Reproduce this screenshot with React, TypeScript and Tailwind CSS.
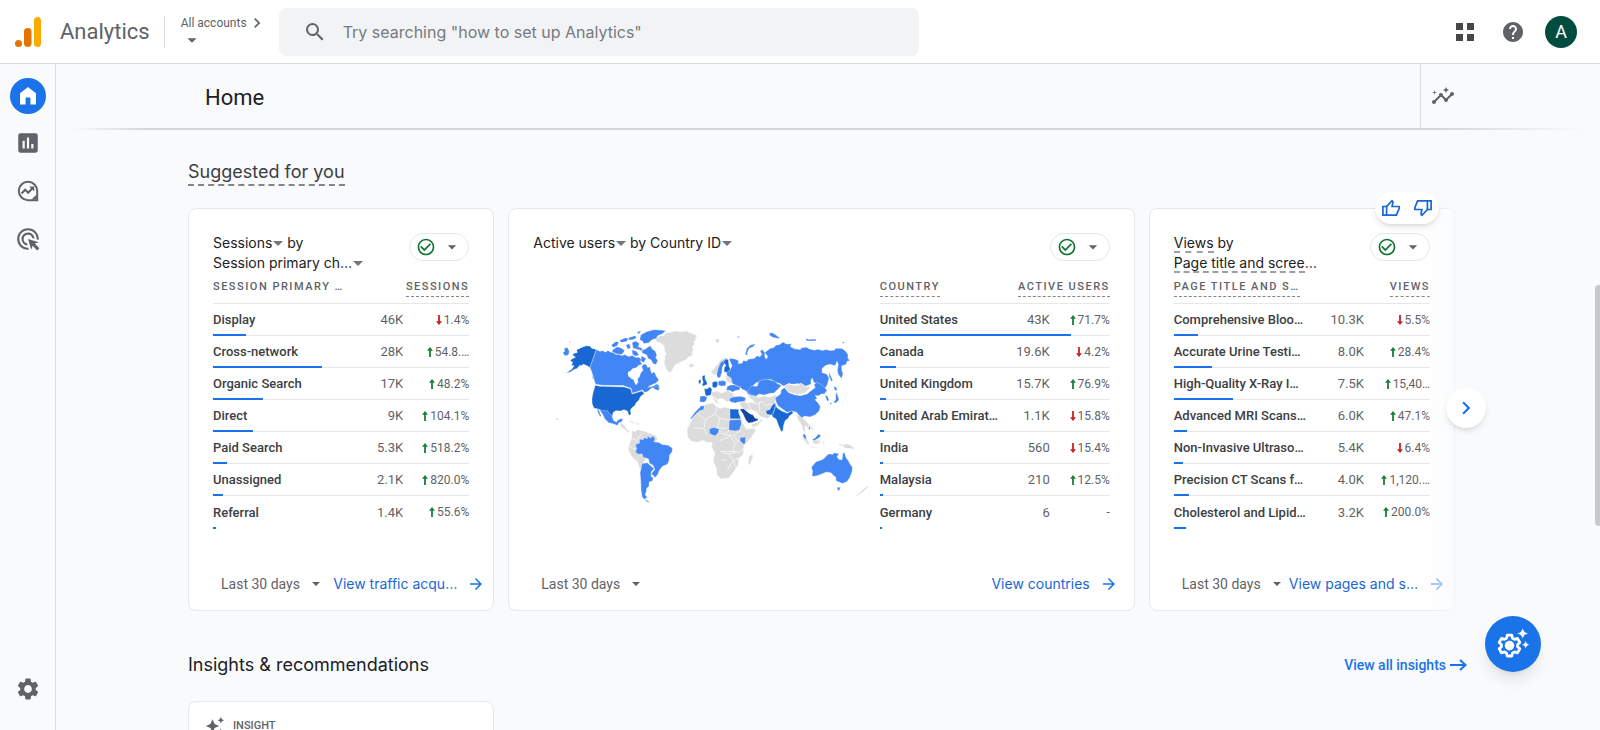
import React from 'react';
import {
  MdAdsClick,
  MdArrowDropDown,
  MdArrowForward,
  MdAutoAwesome,
  MdCheckCircleOutline,
  MdChevronRight,
  MdHelp,
  MdInsertChart,
  MdInsights,
  MdSearch,
  MdSettings,
} from 'react-icons/md';

interface Row {
  label: string;
  value: string;
  change: string;
  trend: 'up' | 'down' | 'none';
  bar: number;
}

const sessionRows: Row[] = [
  { label: 'Display', value: '46K', change: '1.4%', trend: 'down', bar: 13 },
  { label: 'Cross-network', value: '28K', change: '54.8.…', trend: 'up', bar: 42.5 },
  { label: 'Organic Search', value: '17K', change: '48.2%', trend: 'up', bar: 19.5 },
  { label: 'Direct', value: '9K', change: '104.1%', trend: 'up', bar: 15.5 },
  { label: 'Paid Search', value: '5.3K', change: '518.2%', trend: 'up', bar: 5.5 },
  { label: 'Unassigned', value: '2.1K', change: '820.0%', trend: 'up', bar: 4 },
  { label: 'Referral', value: '1.4K', change: '55.6%', trend: 'up', bar: 1.3 },
];

const countryRows: Row[] = [
  { label: 'United States', value: '43K', change: '71.7%', trend: 'up', bar: 83 },
  { label: 'Canada', value: '19.6K', change: '4.2%', trend: 'down', bar: 7 },
  { label: 'United Kingdom', value: '15.7K', change: '76.9%', trend: 'up', bar: 2.5 },
  { label: 'United Arab Emirat…', value: '1.1K', change: '15.8%', trend: 'down', bar: 2 },
  { label: 'India', value: '560', change: '15.4%', trend: 'down', bar: 1.3 },
  { label: 'Malaysia', value: '210', change: '12.5%', trend: 'up', bar: 1.3 },
  { label: 'Germany', value: '6', change: '-', trend: 'none', bar: 1 },
];

const pageRows: Row[] = [
  { label: 'Comprehensive Bloo…', value: '10.3K', change: '5.5%', trend: 'down', bar: 9.5 },
  { label: 'Accurate Urine Testi…', value: '8.0K', change: '28.4%', trend: 'up', bar: 15 },
  { label: 'High-Quality X-Ray I…', value: '7.5K', change: '15,40…', trend: 'up', bar: 23 },
  { label: 'Advanced MRI Scans…', value: '6.0K', change: '47.1%', trend: 'up', bar: 5 },
  { label: 'Non-Invasive Ultraso…', value: '5.4K', change: '6.4%', trend: 'down', bar: 3.7 },
  { label: 'Precision CT Scans f…', value: '4.0K', change: '1,120.…', trend: 'up', bar: 6 },
  { label: 'Cholesterol and Lipid…', value: '3.2K', change: '200.0%', trend: 'up', bar: 4.7 },
];

const Logo = () => (
  <svg width="26" height="30" viewBox="0 0 26 30" aria-hidden="true">
    <rect x="19" y="0" width="7" height="30" rx="3.5" fill="#fbab00" />
    <rect x="9" y="11" width="7.5" height="19" rx="3.7" fill="#e37400" />
    <circle cx="3.5" cy="26.4" r="3.5" fill="#e37400" />
  </svg>
);

const ExploreIcon = () => (
  <svg width="22" height="22" viewBox="0 0 22 22" fill="none" aria-hidden="true">
    <path d="M11 1.8a9.2 9.2 0 1 0 0 18.4h9.2V11A9.2 9.2 0 0 0 11 1.8Z" stroke="#5f6368" strokeWidth="2" />
    <path d="M19.5 14.5 14.5 19.5h5Z" fill="#5f6368" />
    <path d="m4.5 13.5 3.7-3.8 3 3 4.2-4.4" stroke="#5f6368" strokeWidth="2" />
    <path d="M12.3 6.6h4.9v4.9Z" fill="#5f6368" />
  </svg>
);

const HomeIcon = () => (
  <svg width="24" height="24" viewBox="0 0 24 24" fill="#fff" aria-hidden="true">
    <path d="M4 20.5V9.3L12 3l8 6.3v11.2h-5.6v-7H9.6v7Z" />
  </svg>
);

const ThumbIcon = ({ down = false }: { down?: boolean }) => (
  <svg
    width="20"
    height="20"
    viewBox="0 0 20 20"
    fill="none"
    stroke="#1967d2"
    strokeWidth="1.7"
    className={down ? 'rotate-180' : ''}
    aria-hidden="true"
  >
    <path d="M1.9 8.5h3.7v8.7H1.9Z" />
    <path d="M5.6 8.5 11 2.7l1 1-.9 4.8h7v2.2l-2.7 6.5H5.6" />
  </svg>
);

const GearSparkIcon = () => (
  <svg width="34" height="32" viewBox="0 0 34 32" aria-hidden="true">
    <path
      d="M11.2 7.2h4.6l.7 3 2 1.1 3-.9 2.3 4-2.2 2.1v2.2l2.2 2.1-2.3 4-3-.9-2 1.1-.7 3h-4.6l-.7-3-2-1.1-3 .9-2.3-4 2.2-2.1v-2.2l-2.2-2.1 2.3-4 3 .9 2-1.1Z"
      fill="none"
      stroke="#fff"
      strokeWidth="2.8"
      strokeLinejoin="round"
    />
    <circle cx="13.5" cy="17.6" r="4.8" fill="#fff" />
    <path d="M26.7.2c1 3.3 1.9 4.2 5.2 5.2-3.3 1-4.2 1.9-5.2 5.2-1-3.3-1.9-4.2-5.2-5.2 3.3-1 4.2-1.9 5.2-5.2Z" fill="#fff" />
    <path d="M29.7 13c.7 2.5 1.3 3.1 3.8 3.8-2.5.7-3.1 1.3-3.8 3.8-.7-2.5-1.3-3.1-3.8-3.8 2.5-.7 3.1-1.3 3.8-3.8Z" fill="#fff" />
  </svg>
);

const TrendArrow = ({ trend }: { trend: Row['trend'] }) => {
  if (trend === 'none') return null;
  return (
    <svg width="8" height="10" viewBox="0 0 8 10" className="shrink-0" aria-label={trend}>
      {trend === 'up' ? (
        <path d="M4 0 7 3.8H4.9V10H3.1V3.8H1Z" fill="#188038" />
      ) : (
        <path d="M4 10 1 6.2h2.1V0h1.8v6.2H7Z" fill="#c5221f" />
      )}
    </svg>
  );
};

const Caret = () => (
  <svg width="10" height="5" viewBox="0 0 10 5" className="inline-block shrink-0" aria-hidden="true">
    <path d="M0 0h10L5 5Z" fill="#757575" />
  </svg>
);

const WorldMap = () => (
  <svg viewBox="-21 0 1000 600" className="w-full" role="img" aria-label="Active users by country" strokeLinejoin="round">
    <g fill="#dcdcdc" stroke="#fff" strokeWidth="2">
      {/* Greenland, Iceland, Svalbard */}
      <path d="M343 88 352 84 358 80 372 78 376 70 394 69 402 66 420 67 440 66 452 72 472 80 465 86 467 92 460 97 462 106 455 113 459 120 455 130 457 138 444 144 438 152 424 157 415 163 405 167 398 178 394 186 388 191 379 183 374 172 370 160 374 150 371 141 378 136 372 125 371 112 363 103 350 100Z" />
      <path d="m444 167 8-4 9 2-1 7-9 3-6-3ZM521 92l9-4 9 4-8 12Z" />
      {/* Central and northern South America */}
      <path d="m236 343 8-2 10 8 6 12 10 5-6 4-12-10-8-6ZM262 332l12 3 9 5-4 2-12-5ZM286 340l10 2 3 4-13-1Z" />
      <path d="m274 364 12 2 5-6 12 3 15 4 15 6 14 5 4 11-14 25-30 50 28 18 8 12-12 8-34-26-7-20-16-14-11-22 4-17 7-19Z" />
      <path d="m338 484 12 9-6 9-9-3Z" />
      {/* Norway, Baltics, central Europe */}
      <path d="m511 188 10-12 8-8 10-16 16-8 9 3-18 10-12 20-4 17-10 5ZM556 196h17l4 28-21-8ZM512 248l16-3 14 6 18-7 18 7 6 18-24 10-16-12-14 5-16-10ZM515 262l8 3 12 17-6 2-13-16Z" />
      {/* Middle East and central Asia */}
      <path d="m594 280 16-4 9 5 14-3 14 5 16-8 18 2 16 6-4 30-10 16-21-6-17-14-20-8-12 3-12-12Z" />
      <path d="m620 260 20-3 15 7 12-4 18 3 19-5 12 5-11 10-3 14-14-3-12 5-12-13-18 9-10-12Z" />
      <path d="m632 343 20-4 9-10 5 2-14 17-17 7Z" />
      {/* Africa */}
      <path d="m454 330 10-12 14-24 20-10 19-4 8 9 14 8 13-4 20 6 16 3 12 16 7 24 10 17 24-3 4 7-12 20-23 25-2 27-13 12-2 18-14 22-14 18-24 4-12-12-3-23-9-20 5-24-9-17 1-14-14 1-12-7-17 6-18-3-12-12-2-24Z" />
      <path d="m623 444 12-12 2 12-10 24-5-6Z" />
      {/* Southeast Asia, New Zealand */}
      <path d="m768 314 14 8 10 9 15 18-2 8-13-7 1 20-5-2-8-24-12-18ZM783 374l10 8 12 18-2 9-18-22ZM814 388l18 5 8-8-4 16-12 4-9-6ZM844 394l8 3-4 12ZM808 410l26 5-1 3-24-4ZM812 334l6 14-4 3Z" />
      <path d="m890 401 16 4 14-2 15 8 8 9-18-3-12 1-6-8-12-1ZM806 342l6 10 6 10-4 2-8-12ZM942 558l14-10 24-21 2 4-16 16-20 12Z" />
    </g>
    <g fill="none" stroke="#fff" strokeWidth="2">
      <path d="m470 312 25 20 28-20 8-22M523 312l14 14 32 8v-36M537 326l-6 32 28-2M495 332l-5 26-30-3M490 358l9 18M531 358l18 18 18-14M550 376l30 2 20-14M580 378l10 18 30-6M537 394l32-14 15 22-8 24h-38M576 426l22 2 10-12M546 430l20 4 12 20-18 26M566 434l24-8M578 454l18-10M560 450l-18 2M578 454l6 18M620 282l12 20 20 6M655 280l3 30M270 385l20 8 14-22M266 412l22 8M568 334l-4 30" />
    </g>
    <g fill="#4285f4" stroke="#fff" strokeWidth="1">
      {/* Canada */}
      <path d="m168 121 10 5 10-1 8 4 7-5 9 5 7 1 8 6 10-1 7 5 10-4 10 6 12-3 10 6 9-1 8 6-3 8 6 7-11 3-6 7-13 4-5 6-8 4 1 11 9 8 8 4 1 6 5 9 6-8-2-10 6-6 4-12 7-8-4-11 7-8 8 4 3 8 7-4 1 10 4 10 8-4 6 14 7 10-8 9-16 7-9 6 18-4 8-6 8 5 1 11-13-1-9-4-13 12-9 3-7-8-14 5-16 5-4-15-24-8-62-1-20-3-5-15-4-14-4-12-4-10Z" />
      <path d="m301 78 17-10 22-6 22 1 14 2-10 9-14 6-5 8-12 4-11 10-14 1-4-7-8-4ZM322 114l8-4 6 10 9 6 4 12-3 8 6 8-5 12-9-2-6-12-8-3-6-12-12-5-4-10 12-2ZM213 108l14-11 9 2-5 11-12 5ZM219 120l12-7 13 4 9 8-8 11-18-2-12-7ZM237 94l18-8 10 3-6 8-16 3ZM257 108l10-4 4 12-9 4ZM266 85l18-5 5 6-12 6-13 1ZM275 100l12-4 10 8-4 9 12 4 3 9-18-6-12-3ZM275 122l13 4 8 11-10 4-10-6ZM303 140l14 8-7 12-8-4ZM294 67l8-2-6 10-6-4Z" />
      <path d="m340 237 8-8 8 7-1 8-10-3ZM158 200l4 7-2 2-4-5Z" />
      {/* Mexico */}
      <path d="m175 292 14 4 16-3 6 10 7 4-2 16 4 10 8 5 7-8 13-3-3 10-9 3-4 8-14-5-13-3-11-11-7-14-8-12ZM171 293l6 13 6 14-3 2-8-14Z" />
      {/* Brazil and Argentina */}
      <path d="m285 405 12-4 1-12 10 2 5-7 8 4 0-9 8 7 10-6 5 9-4 8 16 2 9 6 18 2 13 9-1 10-8 11-1 16-5 11-15 6-9 12-5 13-8 9-11-12 10-12-5-13-11-6-3-13-16-5-3-10-10 1-10-6 4-10Z" />
      <path d="m305 462 16-2 13 12 7 5-9 10 0 14 7 4-3 9-10 3 0 12-7 7-1 10-4 8 6 10-8 5-7-8-3-19-1-30-2-22 4-17ZM314 569l13 7-1 2-10-3Z" />
      {/* Spain, Morocco, Poland, Ukraine, Turkey, Sweden */}
      <path d="m479 260 13 0 8 3-4 12-7 4-12-2ZM482 289l9 0-2 12-12 3-10 9-14 16-3-2 13-18ZM533 216l14-2 9 3-1 12-12 2-10-4ZM560 231l11-4 10 0 18 7-3 8-12 2-8 4-10-5-9 0ZM568 266l14-4 18-1 15 4-3 11-19 2-9 3-13-3-5-5ZM528 196l4-18 8-18 14-10 0 8-9 16-1 14-5 16-8 2Z" />
      {/* Nigeria, Sudan, Kenya */}
      <path d="m506 358 14-4 16 5-4 12-8 8-8-2-9-5ZM566 332l34-2 2 14-6 18-12 3-20-3ZM598 384l17-1-1 16-4 6-12-10Z" />
      {/* Russia */}
      <path d="m568 182 6-12-8-18 2-5 16 3 10 5-2 8 12-1 4-8 10 2 4-6 18-2 9-8 8 3 6-7-5-10 6-5 8 9 0 11 4 9 5-8-9-11 5-5 12-9 9-1 8-8 9-1 12-8 9 6 16-1-4 8 12 7 18 2 4-5 15-2 7 5 17 4 10-3 13 4 12-3 10 3 14-1 4-6 19 1 11 8 7 11-1 9 6 9-8 1-3 10-13 4 0 12 4 12-5 14-10-14-2-12 3-15-4-11-6 14-15-5-14 4-10 10 0 11 15 5 6 11-5 20-7 12-15-12-18-6-5-13-4 4 0 13-17 8-12-6-10-3-14 2-14-2-14 8-12-8-12-4-15-8-18 2-12 4-15 4-13 14-4 6 10 15-3 4-13-5-6-10-11-5-8-7-12-5-10-5-4-17-12-7-2-10Z" />
      <path d="m613 136 5-18 11-10 15-4-6 8-13 6-6 14 4 6ZM685 72l10-1 10 7 13 9-6 1-14-3-10-4ZM795 88l10 3 20-1 0 5-18 1-12-2ZM588 82l10 0-5 4ZM902 98l8 1-3 4ZM72 117l10-2 6 13-4 10-10 2-6-10 6-4ZM88 99l4-2 0 4ZM864 188l5 12 6 12-3 6-8-17Z" />
      {/* Kazakhstan */}
      <path d="m624 240 8-10 17 1 6-16 18-5 14 2 14 3 8 8 13 6-12 12-10 10-12 1-18 5-15-3-10 7-14-5-10-8Z" />
      {/* China */}
      <path d="m703 266 16-12 2-12 10-7 12 15 17 6 18 3 20-5 15-12 10-7-4-8 8-8 16 8 10 10 5 7-8 10-9 0-8 5-11 0 7 8-7 4 10 11 6 10-3 12-12 12-16 7-15-3-10 5-9-9-7-8-14-2-14 3-10-8-16-11-6-12Z" />
      {/* Japan and Korea */}
      <path d="m878 230 10 7-2 9-6-6ZM886 250l4 8 4 14-10 9-7-2 7-8 0-17ZM867 280l6 0-4 8ZM852 258l8 3 4 12-5 3-4-9Z" />
      {/* Malaysia, Vietnam */}
      <path d="m787 373 6 2 4 12-4 2-7-9ZM814 390l10-6 8-10 8 4-6 8-10 5-6 2ZM805 350l3 6-2 6-3-1Z" />
      {/* Australia */}
      <path d="m818 465 7-8 12-4 9-4 6-5 7-8 7-3 9 2 4-5 15 3-6 9 6 8 9 1 2-18 5-5 5 17 8 10 4 9 7 9-1 12-6 17-9 14-14 6-10-5-9-3-1-12-7-4-6-8-14-3-12 5-10 4-9 3-13 1 2-16-4-10ZM888 533l10 0-3 10-5 0Z" />
      <path d="m42 318 5 4M48 326l5 3-2 3Z" />
    </g>
    <g fill="#1967d2" stroke="#fff" strokeWidth="1">
      {/* United States with Alaska */}
      <path d="m168 121-14-4-4-6-12-1-12 4-16 8 1 9-9 1-5 5 9 7-12 6-4 5 8 4-4 9 8 2-6 9-13 9-7 3 13-2 14-9 8-2 7-9 5 0 7-4 11 5 8 5Z" />
      <path d="m165 228 14 3 72 2 20 6 4 15 15-4 14-5 8 7-12 10-4 10-9 8-2 7-11 9-4 7 2 11-5 5-6-14-10-4-10 4-15-1-8 6-2 10-8-8-6-8-14 0-14-5-13-3-5-12-1-14 3-18Z" />
      {/* UK, Ireland, France, Germany, Finland */}
      <path d="m485 200 8-3 0 11 5 9 2 8-11 5-5-2 4-9-3-9ZM474 213l7-2 0 10-6 3ZM491 238l8 1 8-6 7 7-3 17-12 3-5-3ZM515 220l8-4 8 2-1 13-6 5-9-3ZM549 160l6-11 8 3 2 19 4 9-8 9-11-1 1-13 5-6Z" />
      {/* Egypt, Pakistan, India */}
      <path d="m568 299 26 1 0 10 6 18-32 0ZM675 304l12-3 8-15 8-5 3 8-9 21-1 8-18-3ZM703 285l6 11 12 8 18 8 14-8 4 7-12 9-2 6-10 7-5 15-2 17-5 1-8-18-7-19-9-5-6-8 8-8 3-13Z" />
    </g>
    {/* Saudi Arabia */}
    <path d="m597 299 11-1 19 15 10 4 6 10 9 1-1 5-17 6-11 2-8-9-8-18Z" fill="#0d47a1" stroke="#fff" strokeWidth="1" />
    {/* Mongolia */}
    <path d="m728 231 16-7 14 4 14-1 8-5 14 9 15 1-8 12-12 8-16 4-18-4-12-4-8-11Z" fill="#dcdcdc" stroke="#fff" strokeWidth="2" />
  </svg>
);

const StatusPill = () => (
  <button
    type="button"
    aria-label="Data quality"
    className="flex h-7 w-15 shrink-0 items-center justify-between rounded-full border border-gray-200 bg-white px-1.5"
  >
    <MdCheckCircleOutline size={20} color="#137333" />
    <MdArrowDropDown size={20} color="#5f6368" />
  </button>
);

interface DataTableProps {
  rows: Row[];
  dimension: string;
  metric: string;
  dottedDimension?: boolean;
  compact?: boolean;
}

const DataTable: React.FC<DataTableProps> = ({ rows, dimension, metric, dottedDimension = true, compact = false }) => (
  <table className="w-full table-fixed border-collapse text-[13px]">
    <colgroup>
      <col />
      <col className="w-[52px]" />
      <col className={compact ? 'w-15' : 'w-[66px]'} />
    </colgroup>
    <thead>
      <tr className="h-[26px] border-b border-gray-200 text-[11px] tracking-[1.5px] text-[#5f6368]">
        <th className="p-0 text-left align-top font-medium whitespace-nowrap">
          <span className={dottedDimension ? 'inline-block h-5 border-b border-dashed border-[#80868b] leading-5' : 'leading-5'}>
            {dimension}
          </span>
        </th>
        <th colSpan={2} className="p-0 text-right align-top font-medium whitespace-nowrap">
          <span className="inline-block h-5 border-b border-dashed border-[#80868b] leading-5">{metric}</span>
        </th>
      </tr>
    </thead>
    <tbody>
      {rows.map((row, index) => (
        <tr key={row.label} className={`relative h-8 ${index < rows.length - 1 ? 'border-b border-gray-200' : ''}`}>
          <td className="px-0 pt-0.5 pb-0 font-medium whitespace-nowrap text-[#3c4043]">
            {row.label}
            <div className="absolute -bottom-0.5 left-0 h-0.5 bg-[#1a73e8]" style={{ width: `${row.bar}%` }} />
          </td>
          <td className="px-0 pt-0.5 pb-0 text-right text-[#5f6368]">{row.value}</td>
          <td className="px-0 pt-0.5 pb-0 text-xs text-[#5f6368]">
            <div className="flex items-center justify-end gap-px">
              <TrendArrow trend={row.trend} />
              {row.change}
            </div>
          </td>
        </tr>
      ))}
    </tbody>
  </table>
);

const CardFooter = ({ link, faded = false, wide = false }: { link: string; faded?: boolean; wide?: boolean }) => (
  <div className={`mt-auto flex items-center justify-between pb-4 pl-8 ${wide ? 'pr-4' : 'pr-2'}`}>
    <button type="button" className="flex items-center gap-3 text-sm whitespace-nowrap text-[#5f6368]">
      Last 30 days
      <svg width="8" height="4" viewBox="0 0 8 4" aria-hidden="true">
        <path d="M0 0h8L4 4Z" fill="#5f6368" />
      </svg>
    </button>
    <a href="#" className="flex items-center gap-2.5 font-[Inter,sans-serif] text-sm whitespace-nowrap text-[#1967d2]">
      {link}
      <MdArrowForward size={18} color={faded ? '#669df6' : '#1a73e8'} />
    </a>
  </div>
);

const MetricButton = ({ children }: { children: React.ReactNode }) => (
  <button type="button" className="inline-flex items-center gap-px">
    {children}
    <Caret />
  </button>
);

const cardClass = 'flex h-[403px] flex-col rounded-lg border border-gray-200 bg-white pt-6';
const titleClass = 'font-[Inter,sans-serif] text-sm leading-5 whitespace-nowrap text-[#202124]';

const App: React.FC = () => {
  return (
    <div className="flex h-screen flex-col overflow-hidden bg-[#f8fafc] font-[Roboto,sans-serif] text-[#202124]">
      <header className="relative z-10 flex h-16 shrink-0 items-center border-b border-[#dadce0] bg-white pr-[23px] pl-[15px]">
        <a href="#" className="flex items-center gap-[19px]">
          <Logo />
          <span className="text-[22px] text-[#5f6368]">Analytics</span>
        </a>
        <div className="ml-3.5 h-8 w-px bg-[#dadce0]" />
        <button type="button" className="ml-4 flex w-[98px] flex-col items-start pb-1 text-xs text-[#5f6368]">
          <span className="flex h-5 items-center whitespace-nowrap">
            All accounts
            <MdChevronRight size={20} />
          </span>
          <MdArrowDropDown size={22} className="-my-1" />
        </button>
        <label className="flex h-12 w-[640px] items-center gap-4 rounded-lg bg-[#f1f3f4] px-6">
          <MdSearch size={24} color="#5f6368" />
          <input
            type="text"
            aria-label="Search"
            placeholder={'Try searching "how to set up Analytics"'}
            className="flex-1 bg-transparent font-[Inter,sans-serif] text-base outline-none placeholder:text-[#757b80]"
          />
        </label>
        <div className="ml-auto flex items-center gap-5">
          <button type="button" aria-label="Google apps" className="p-1.5">
            <svg width="20" height="20" viewBox="0 0 20 20" fill="#474747">
              <path d="M1 1h7v7H1ZM12 1h7v7h-7ZM1 12h7v7H1ZM12 12h7v7h-7Z" />
            </svg>
          </button>
          <button type="button" aria-label="Help">
            <MdHelp size={24} color="#5f6368" />
          </button>
          <button type="button" className="size-8 rounded-full bg-[#004d40] text-lg text-white">
            A
          </button>
        </div>
      </header>

      <div className="flex min-h-0 flex-1">
        <nav className="flex w-14 shrink-0 flex-col items-center border-r border-[#dadce0] pt-3.5 pb-7">
          <a href="#" aria-label="Home" className="flex size-9 items-center justify-center rounded-full bg-[#1a73e8]">
            <HomeIcon />
          </a>
          <a href="#" aria-label="Reports" className="mt-4">
            <MdInsertChart size={26} color="#5f6368" />
          </a>
          <a href="#" aria-label="Explore" className="mt-6">
            <ExploreIcon />
          </a>
          <a href="#" aria-label="Advertising" className="mt-6">
            <MdAdsClick size={26} color="#5f6368" />
          </a>
          <a href="#" aria-label="Admin" className="mt-auto">
            <MdSettings size={26} color="#5f6368" />
          </a>
        </nav>

        <main className="min-w-0 flex-1 overflow-hidden">
          <div className="flex h-16 items-center justify-between pr-[145px] pl-[149px]">
            <h1 className="pt-0.5 text-[22px]">Home</h1>
            <div className="flex h-full items-center border-l border-[#dadce0] pl-2.5">
              <button type="button" aria-label="Insights">
                <MdInsights size={24} color="#5f6368" />
              </button>
            </div>
          </div>
          <div className="mx-4 h-0.5 bg-[linear-gradient(to_right,transparent,#d2d5d9_5%,#d2d5d9_90%,transparent)]" />

          <div className="pr-[145px] pl-[132px]">
            <h2 className="mt-[30px] inline-block border-b-2 border-dashed border-[#80868b] font-[Inter,sans-serif] text-lg leading-6 text-[#3c4043]">
              Suggested for you
            </h2>

            <div className="relative mt-[22px] grid grid-cols-4 gap-3.5">
              <section className={cardClass}>
                <div className="flex h-10 items-start justify-between px-6">
                  <h3 className={titleClass}>
                    <MetricButton>Sessions</MetricButton> by
                    <br />
                    <MetricButton>Session primary ch…</MetricButton>
                  </h3>
                  <StatusPill />
                </div>
                <div className="px-6 pt-1">
                  <DataTable rows={sessionRows} dimension="SESSION PRIMARY …" metric="SESSIONS" dottedDimension={false} />
                </div>
                <CardFooter link="View traffic acqu…" />
              </section>

              <section className={`col-span-2 ${cardClass}`}>
                <div className="flex h-10 items-start justify-between px-6">
                  <h3 className={titleClass}>
                    <MetricButton>Active users</MetricButton> by <MetricButton>Country ID</MetricButton>
                  </h3>
                  <StatusPill />
                </div>
                <div className="flex gap-3 px-6 pt-1">
                  <div className="min-w-0 flex-1 pt-8">
                    <WorldMap />
                  </div>
                  <div className="w-[230px] shrink-0">
                    <DataTable rows={countryRows} dimension="COUNTRY" metric="ACTIVE USERS" compact />
                  </div>
                </div>
                <CardFooter link="View countries" wide />
              </section>

              <section className={cardClass}>
                <div className="flex h-10 items-start justify-between px-6">
                  <h3 className={titleClass}>
                    <span className="inline-block h-5 border-b-2 border-dashed border-[#9aa0a6]">Views</span> by
                    <br />
                    <span className="inline-block h-5 border-b-2 border-dashed border-[#9aa0a6]">Page title and scree</span>…
                  </h3>
                  <StatusPill />
                </div>
                <div className="px-6 pt-1">
                  <DataTable rows={pageRows} dimension="PAGE TITLE AND S…" metric="VIEWS" />
                </div>
                <CardFooter link="View pages and s…" faded />
              </section>

              <div className="pointer-events-none absolute -top-4 right-0 -bottom-2 w-8 bg-linear-to-r from-transparent to-[#f8fafc]/70" />

              <div className="absolute -top-4 right-4 flex h-8 w-16 items-center justify-between rounded-full bg-white px-1.5 shadow-md">
                <button type="button" aria-label="Helpful">
                  <ThumbIcon />
                </button>
                <button type="button" aria-label="Not helpful">
                  <ThumbIcon down />
                </button>
              </div>

              <button
                type="button"
                aria-label="Next"
                className="absolute top-45 -right-[31px] flex size-10 items-center justify-center rounded-full bg-white shadow-md"
              >
                <MdChevronRight size={26} color="#1a73e8" />
              </button>
            </div>

            <div className="mt-10 flex items-center justify-between">
              <h2 className="font-[Inter,sans-serif] text-lg leading-7">Insights &amp; recommendations</h2>
              <a href="#" className="-mr-3 flex items-center gap-1 text-sm font-medium text-[#1a73e8]">
                View all insights
                <svg width="17" height="12" viewBox="0 0 17 12" fill="none" stroke="#1a73e8" strokeWidth="2">
                  <path d="M0 6h15.5M10 1l5.5 5-5.5 5" />
                </svg>
              </a>
            </div>

            <div className="mt-[22px] grid grid-cols-4 gap-3.5">
              <section className="h-60 rounded-lg border border-gray-200 bg-white px-4 pt-3.5">
                <div className="flex items-center gap-2 text-[11px] font-medium text-[#5f6368]">
                  <MdAutoAwesome size={20} />
                  INSIGHT
                </div>
              </section>
            </div>
          </div>
        </main>
      </div>

      <button
        type="button"
        aria-label="Setup assistant"
        className="fixed right-[59px] bottom-[58px] flex size-14 items-center justify-center rounded-full bg-[#1a73e8] shadow-lg"
      >
        <GearSparkIcon />
      </button>
      <div className="fixed top-[39%] right-0 h-[33%] w-[5px] rounded-l-sm bg-[#c8c9cb]" />
    </div>
  );
};

export default App;
